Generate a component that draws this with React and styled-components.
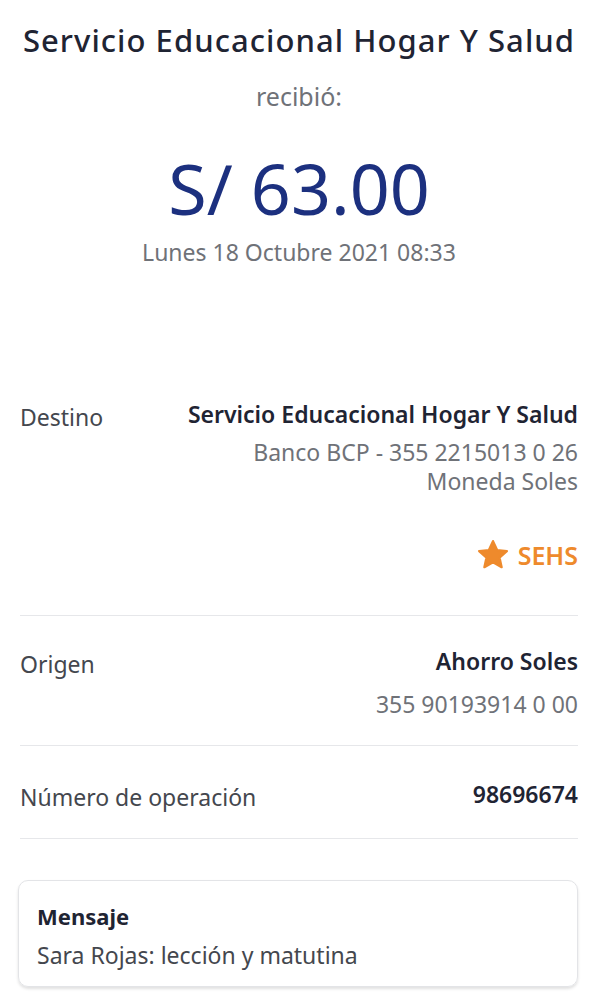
import styled, { createGlobalStyle } from "styled-components";

const GlobalStyle = createGlobalStyle`
  html, body {
    margin: 0;
    padding: 0;
    background: #ffffff;
    font-family: "Noto Sans", "DejaVu Sans", sans-serif;
  }
`;

const Page = styled.div`
  width: 590px;
  min-height: 994px;
  box-sizing: border-box;
  padding: 20px 12px 0 20px;
  display: flex;
  flex-direction: column;
`;

const Header = styled.header`
  display: flex;
  flex-direction: column;
  align-items: center;
`;

const Title = styled.h1`
  margin: 0;
  font-size: 31px;
  font-weight: 500;
  color: #1f2433;
  line-height: 40px;
  letter-spacing: 1.05px;
  white-space: nowrap;
`;

const Received = styled.div`
  margin-top: 21px;
  font-size: 25px;
  color: #6f7278;
  line-height: 30px;
`;

const Amount = styled.div`
  margin-top: 29px;
  font-size: 70px;
  color: #1c307f;
  line-height: 96px;
`;

const DateText = styled.div`
  margin-top: 1px;
  font-size: 23px;
  color: #6f7278;
  line-height: 30px;
`;

const Details = styled.section`
  margin-top: 132px;
  display: flex;
  flex-direction: column;
`;

const Row = styled.div`
  display: flex;
  justify-content: space-between;
  align-items: flex-start;
  padding: ${(p) => p.$top}px 0 ${(p) => p.$bottom}px;
  border-bottom: 1px solid #e6e7ea;
`;

const Label = styled.div`
  font-size: 23px;
  color: #44474e;
  line-height: 30px;
  margin-top: 3px;
`;

const Values = styled.div`
  display: flex;
  flex-direction: column;
  align-items: flex-end;
  text-align: right;
`;

const Strong = styled.div`
  font-size: 23px;
  font-weight: 600;
  color: #1f2433;
  line-height: 30px;
`;

const Sub = styled.div`
  font-size: 23px;
  color: #6f7278;
  line-height: 29px;
  margin-top: ${(p) => p.$gap || 0}px;
`;

const Favorite = styled.div`
  display: flex;
  align-items: center;
  gap: 8px;
  margin-top: 42px;
  height: 34px;
  font-size: 25px;
  font-weight: 600;
  color: #ee8a2c;
`;

const MessageCard = styled.div`
  margin: 41px 0 0 -2px;
  border: 1px solid #e3e4e7;
  border-radius: 10px;
  box-shadow: 0 2px 3px rgba(0, 0, 0, 0.12);
  padding: 21px 18px 17px;
`;

const MessageTitle = styled.div`
  font-size: 22px;
  font-weight: 700;
  color: #1f2433;
  line-height: 28px;
`;

const MessageText = styled.div`
  margin-top: 11px;
  font-size: 23px;
  color: #44474e;
  line-height: 28px;
`;

function Star() {
  return (
    <svg width="34" height="34" viewBox="0 0 24 24">
      <path
        d="M12 2.2l2.9 6.3 6.9.7-5.2 4.6 1.5 6.8L12 17.1l-6.1 3.5 1.5-6.8-5.2-4.6 6.9-.7z"
        fill="#ee8a2c"
        stroke="#ee8a2c"
        strokeWidth="1.6"
        strokeLinejoin="round"
      />
    </svg>
  );
}

export default function App() {
  return (
    <>
      <GlobalStyle />
      <Page>
        <Header>
          <Title>Servicio Educacional Hogar Y Salud</Title>
          <Received>recibió:</Received>
          <Amount>S/ 63.00</Amount>
          <DateText>Lunes 18 Octubre 2021 08:33</DateText>
        </Header>

        <Details>
          <Row $top={0} $bottom={43}>
            <Label>Destino</Label>
            <Values>
              <Strong>Servicio Educacional Hogar Y Salud</Strong>
              <Sub $gap={9}>Banco BCP - 355 2215013 0 26</Sub>
              <Sub>Moneda Soles</Sub>
              <Favorite>
                <Star />
                SEHS
              </Favorite>
            </Values>
          </Row>
          <Row $top={30} $bottom={26}>
            <Label>Origen</Label>
            <Values>
              <Strong>Ahorro Soles</Strong>
              <Sub $gap={14}>355 90193914 0 00</Sub>
            </Values>
          </Row>
          <Row $top={33} $bottom={26}>
            <Label>Número de operación</Label>
            <Values>
              <Strong>98696674</Strong>
            </Values>
          </Row>
        </Details>

        <MessageCard>
          <MessageTitle>Mensaje</MessageTitle>
          <MessageText>Sara Rojas: lección y matutina</MessageText>
        </MessageCard>
      </Page>
    </>
  );
}
